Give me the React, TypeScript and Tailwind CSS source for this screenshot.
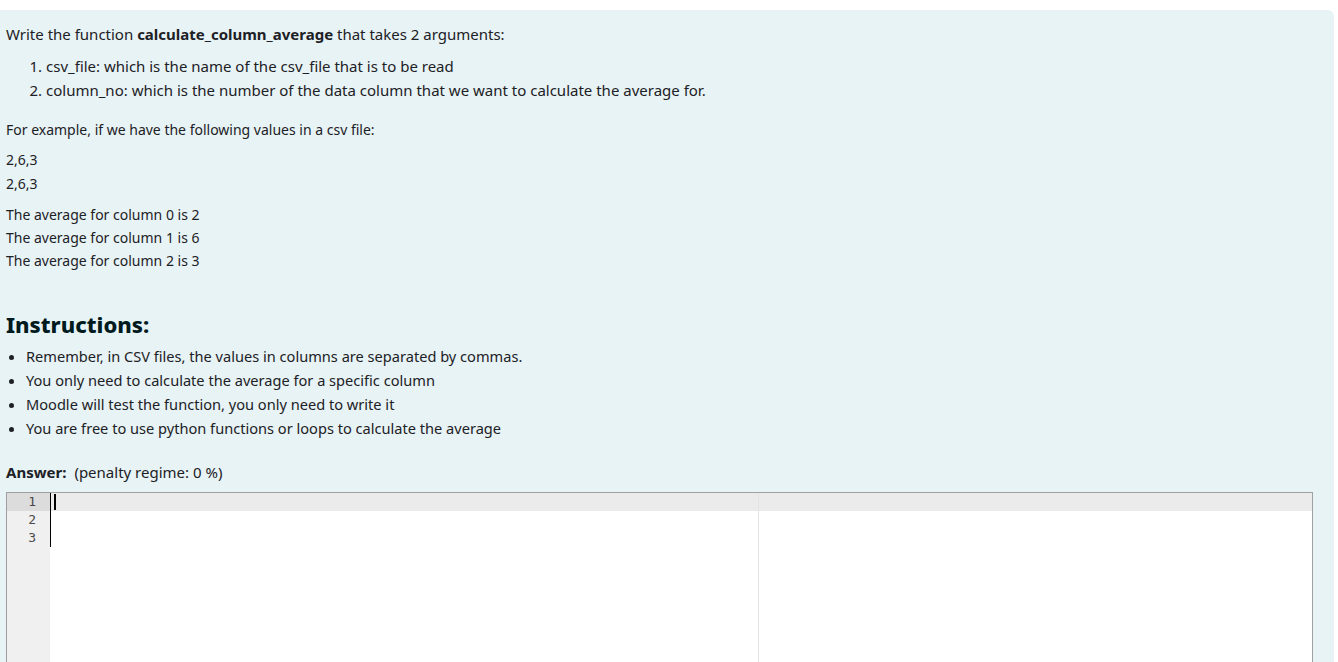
import React from 'react'

const font = { fontFamily: '"Noto Sans", "Open Sans", sans-serif' }

export default function App() {
  return (
    <div className="min-h-[662px] bg-white pt-[10px] overflow-hidden" style={font}>
      <div className="mr-[4px] rounded-tr-[6px] bg-[#e7f3f5] pl-[6px] pr-[20px] pt-[12px] pb-0 text-[#1d2125] h-[652px]">
        <p className="text-[15px] leading-[24px]">
          Write the function <strong className="font-bold">calculate_column_average</strong> that takes 2 arguments:
        </p>
        <ol className="mt-[8px] list-decimal pl-[40px] text-[15px] leading-[24px]">
          <li>csv_file: which is the name of the csv_file that is to be read</li>
          <li>column_no: which is the number of the data column that we want to calculate the average for.</li>
        </ol>
        <p className="mt-[16px] text-[14px] leading-[24px]">For example, if we have the following values in a csv file:</p>
        <div className="mt-[6px] text-[14px] leading-[24px]">
          <div>2,6,3</div>
          <div>2,6,3</div>
        </div>
        <div className="mt-[7px] text-[14px] leading-[23px]">
          <div>The average for column 0 is 2</div>
          <div>The average for column 1 is 6</div>
          <div>The average for column 2 is 3</div>
        </div>
        <h3 className="mt-[38px] text-[22px] font-extrabold leading-[28px] text-[#001a1e]">Instructions:</h3>
        <ul className="mt-[6px] list-disc pl-[20px] text-[14.6px] leading-[24px]">
          <li>Remember, in CSV files, the values in columns are separated by commas.</li>
          <li>You only need to calculate the average for a specific column</li>
          <li>Moodle will test the function, you only need to write it</li>
          <li>You are free to use python functions or loops to calculate the average</li>
        </ul>
        <div className="mt-[20px] flex items-baseline gap-[8px] text-[15px] leading-[24px]">
          <span className="font-bold">Answer:</span>
          <span>(penalty regime: 0 %)</span>
        </div>
        <div className="mt-[8px] mr-[1px] flex h-[200px] border border-[#a0a0a0] bg-white">
          <div className="w-[43px] shrink-0 bg-[#f0f0f0] text-right text-[13px] leading-[18px] text-[#4a4a4a]" style={{ fontFamily: '"DejaVu Sans Mono", monospace' }}>
            <div className="bg-[#dcdcdc] pr-[14px]">1</div>
            <div className="pr-[14px]">2</div>
            <div className="pr-[14px]">3</div>
          </div>
          <div className="relative flex-1">
            <div className="h-[18px] bg-[#ebebeb]" />
            <div className="absolute left-0 top-0 h-[54px] w-px bg-black" />
            <div className="absolute left-[4px] top-[1px] h-[16px] w-[2px] bg-black" />
            <div className="absolute top-0 bottom-0 left-[708px] w-px bg-[#e3e3e3]" />
          </div>
        </div>
      </div>
    </div>
  )
}
